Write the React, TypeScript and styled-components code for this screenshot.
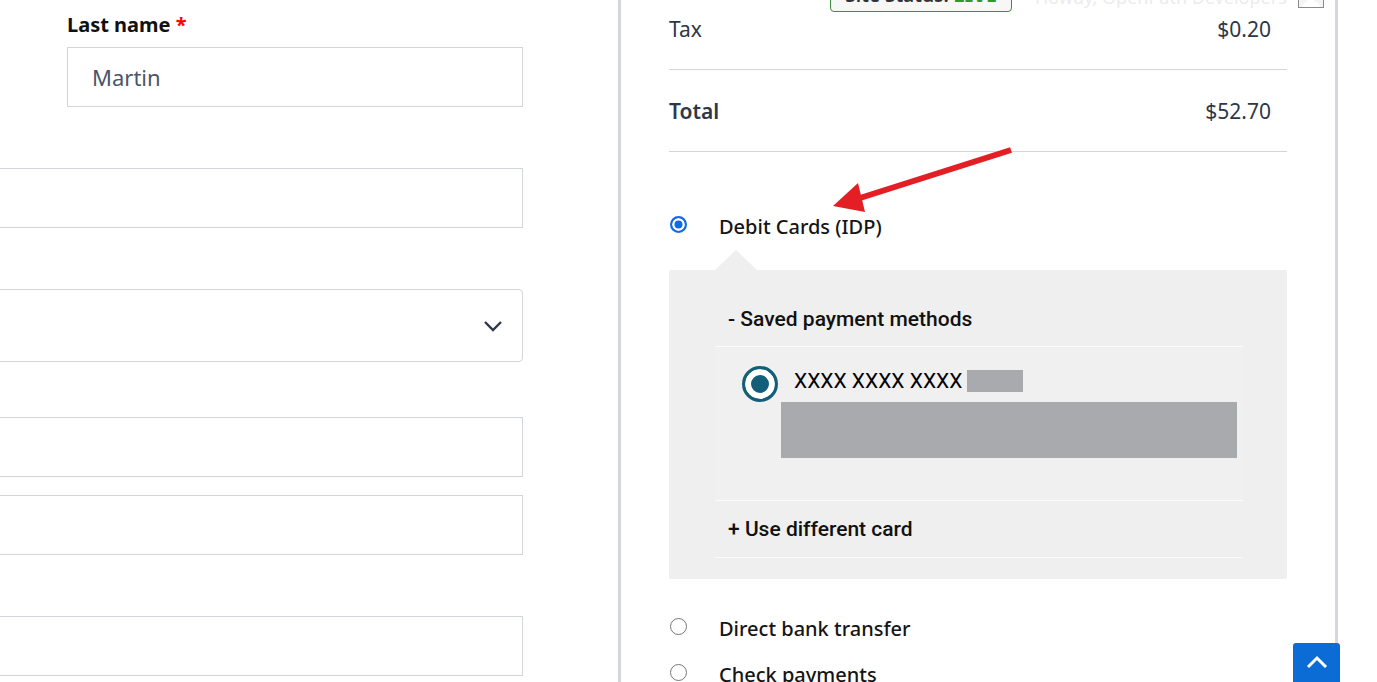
import * as React from 'react';
import styled, { createGlobalStyle } from 'styled-components';

const GlobalStyle = createGlobalStyle`
  html, body {
    margin: 0;
    padding: 0;
    background: #fff;
    font-family: "Noto Sans", "Open Sans", sans-serif;
  }
`

const Page = styled.div`
  position: relative;
  display: flex;
  width: 1377px;
  height: 682px;
  overflow: hidden;
  background: #fff;
`

/* ---------- left: billing form ---------- */

const FormColumn = styled.div`
  width: 618px;
  flex: none;
  overflow: hidden;
`
const FormGrid = styled.div`
  display: grid;
  grid-template-columns: 420px 456px;
  column-gap: 94px;
  width: 970px;
  margin-left: -447px;
  padding-top: 10px;
`
const Field = styled.div<{ $wide?: boolean; $gap?: number }>`
  grid-column: ${p => (p.$wide ? '1 / -1' : 'auto')};
  margin-bottom: ${p => p.$gap ?? 24}px;
`
const Label = styled.label`
  display: block;
  height: 30px;
  line-height: 30px;
  margin-bottom: 7px;
  font-size: 20px;
  font-weight: 700;
  color: #111;
  white-space: nowrap;
`
const Required = styled.span`
  color: #f00;
`
const TextInput = styled.input`
  display: block;
  box-sizing: border-box;
  width: 100%;
  height: 60px;
  padding: 0 24px;
  border: 1px solid #d3d5dc;
  border-radius: 0;
  background: #fff;
  font-family: "Noto Sans", sans-serif;
  font-size: 22px;
  color: #4a5568;
  outline: none;
`
const SelectBox = styled.div`
  box-sizing: border-box;
  display: flex;
  align-items: center;
  justify-content: flex-end;
  height: 73px;
  padding-right: 19px;
  border: 1px solid #d3d5dc;
  border-radius: 4px;
  background: #fff;
`

/* ---------- right: order review ---------- */

const ReviewPanel = styled.div`
  width: 618px;
  flex: none;
  padding: 0 48px;
  border-left: 3px solid #d4d7de;
  border-right: 3px solid #d4d7de;
  color: #2d3748;
`
const Summary = styled.div`
  margin-top: -12px;
`
const SummaryRow = styled.div<{ $strong?: boolean }>`
  display: flex;
  justify-content: space-between;
  align-items: center;
  height: 81px;
  border-bottom: 1px solid #d3d5dc;
  font-size: 21px;
  padding-right: 16px;
  span:first-child {
    font-weight: ${p => (p.$strong ? 600 : 400)};
  }
`
const PaymentList = styled.div`
  display: flex;
  flex-direction: column;
  gap: 16px;
  padding-top: 60px;
`
const MethodRow = styled.div`
  display: flex;
  align-items: flex-start;
  height: 30px;
  line-height: 30px;
  font-size: 20px;
  font-weight: 500;
  color: #151515;
`
const Radio = styled.span<{ $checked?: boolean }>`
  box-sizing: border-box;
  flex: none;
  width: 17px;
  height: 17px;
  margin: 4px 32px 0 1px;
  border-radius: 50%;
  border: ${p => (p.$checked ? '2px solid #0b6cf0' : '1px solid #767676')};
  background: ${p => (p.$checked ? '#0b6cf0' : '#fff')};
  box-shadow: ${p => (p.$checked ? 'inset 0 0 0 2.5px #fff' : 'none')};
`
const MethodBox = styled.div`
  position: relative;
  margin: 28px 0 19px;
  padding: 22px 44px 21px 46px;
  background: #efefef;
  border-radius: 2px;
  font-family: Roboto, "Noto Sans", sans-serif;
  color: #111;
  &::before {
    content: '';
    position: absolute;
    top: -20px;
    left: 46px;
    border-left: 21px solid transparent;
    border-right: 21px solid transparent;
    border-bottom: 20px solid #efefef;
  }
`
const SavedList = styled.div`
  display: flex;
  flex-direction: column;
`
const SavedItem = styled.div<{ $h?: number }>`
  display: flex;
  align-items: center;
  height: ${p => p.$h ?? 54}px;
  padding-left: 13px;
  border-bottom: 1px solid #fafafa;
  font-size: 21px;
  font-weight: 500;
`
const CardRow = styled.div`
  padding: 19px 6px 42px 27px;
  background: #f0f0f0;
  border-bottom: 1px solid #fafafa;
`
const CardHead = styled.div`
  display: flex;
  align-items: center;
  gap: 16px;
`
const CardRadio = styled.span`
  box-sizing: border-box;
  flex: none;
  width: 36px;
  height: 36px;
  border-radius: 50%;
  border: 3px solid #135f7a;
  background: #135f7a;
  box-shadow: inset 0 0 0 6px #fff;
`
const CardNumber = styled.span`
  display: flex;
  align-items: center;
  gap: 5px;
  margin-bottom: 6px;
  font-size: 21px;
  font-weight: 400;
  color: #000;
`
const Redacted = styled.span<{ $w: number; $h: number }>`
  display: block;
  width: ${p => p.$w}px;
  height: ${p => p.$h}px;
  background: #a9aaad;
`
const CardMeta = styled.div`
  margin-left: 39px;
`

/* ---------- overlays ---------- */

const StatusBadge = styled.div`
  position: absolute;
  top: -16px;
  left: 830px;
  box-sizing: border-box;
  width: 182px;
  height: 28px;
  border: 1px solid #3b8e3b;
  border-radius: 0 0 4px 4px;
  background: #f7f7f7;
  font-size: 19px;
  font-weight: 600;
  line-height: 20px;
  text-align: center;
  color: #333;
  b {
    color: #2e9a2e;
  }
`
const Howdy = styled.div`
  position: absolute;
  top: -14px;
  left: 1035px;
  display: flex;
  align-items: flex-end;
  gap: 11px;
  font-size: 18px;
  line-height: 22px;
  color: #ececec;
  white-space: nowrap;
`
const Avatar = styled.span`
  box-sizing: border-box;
  width: 26px;
  height: 21px;
  border: 1px solid #8a8a8a;
  background: #f4f4f4;
  overflow: hidden;
  display: flex;
  justify-content: center;
  align-items: flex-end;
`
const ArrowMark = styled.svg`
  position: absolute;
  left: 820px;
  top: 140px;
`
const ScrollTop = styled.button`
  position: absolute;
  left: 1293px;
  top: 643px;
  width: 47px;
  height: 45px;
  border: 0;
  border-radius: 3px 3px 0 0;
  background: #0a6cd4;
  display: flex;
  align-items: flex-start;
  justify-content: center;
  padding-top: 12px;
  cursor: pointer;
`

export default function App() {
  return (
    <>
      <GlobalStyle />
      <Page>
        <FormColumn>
          <FormGrid>
            <Field>
              <Label>First name <Required>*</Required></Label>
              <TextInput readOnly value="Jon" />
            </Field>
            <Field>
              <Label>Last name <Required>*</Required></Label>
              <TextInput readOnly value="Martin" />
            </Field>
            <Field $wide>
              <Label>Company name (optional)</Label>
              <TextInput readOnly value="" />
            </Field>
            <Field $wide $gap={18}>
              <Label>Country / Region <Required>*</Required></Label>
              <SelectBox>
                <svg width="20" height="12" viewBox="0 0 20 12">
                  <path d="M2 2l8 8 8-8" fill="none" stroke="#2d3748" strokeWidth="2.4" />
                </svg>
              </SelectBox>
            </Field>
            <Field $wide $gap={18}>
              <Label>Street address <Required>*</Required></Label>
              <TextInput readOnly value="" />
            </Field>
            <Field $wide>
              <TextInput readOnly value="" />
            </Field>
            <Field $wide>
              <Label>Town / City <Required>*</Required></Label>
              <TextInput readOnly value="" />
            </Field>
          </FormGrid>
        </FormColumn>

        <ReviewPanel>
          <Summary>
            <SummaryRow>
              <span>Tax</span>
              <span>$0.20</span>
            </SummaryRow>
            <SummaryRow $strong>
              <span>Total</span>
              <span>$52.70</span>
            </SummaryRow>
          </Summary>

          <PaymentList>
            <div>
              <MethodRow>
                <Radio $checked />
                Debit Cards (IDP)
              </MethodRow>
              <MethodBox>
                <SavedList>
                  <SavedItem>- Saved payment methods</SavedItem>
                  <CardRow>
                    <CardHead>
                      <CardRadio />
                      <CardNumber>
                        XXXX XXXX XXXX
                        <Redacted $w={56} $h={22} />
                      </CardNumber>
                    </CardHead>
                    <CardMeta>
                      <Redacted $w={456} $h={56} />
                    </CardMeta>
                  </CardRow>
                  <SavedItem $h={56}>+ Use different card</SavedItem>
                </SavedList>
              </MethodBox>
            </div>
            <MethodRow>
              <Radio />
              Direct bank transfer
            </MethodRow>
            <MethodRow>
              <Radio />
              Check payments
            </MethodRow>
          </PaymentList>
        </ReviewPanel>

        <StatusBadge>Site Status: <b>LIVE</b></StatusBadge>
        <Howdy>
          Howdy, OpenPath Developers
          <Avatar>
            <svg width="20" height="16" viewBox="0 0 20 16">
              <circle cx="10" cy="6" r="5" fill="#fff" />
              <path d="M1 16c1-5 5-6 9-6s8 1 9 6z" fill="#fff" />
            </svg>
          </Avatar>
        </Howdy>

        <ArrowMark width="200" height="80" viewBox="0 0 200 80">
          <line x1="40" y1="58" x2="191" y2="10" stroke="#e31e24" strokeWidth="6" />
          <polygon points="13,66 38,43 45,72" fill="#e31e24" />
        </ArrowMark>

        <ScrollTop aria-label="Back to top">
          <svg width="22" height="14" viewBox="0 0 22 14">
            <path d="M2 12l9-9 9 9" fill="none" stroke="#fff" strokeWidth="3" />
          </svg>
        </ScrollTop>
      </Page>
    </>
  );
}
